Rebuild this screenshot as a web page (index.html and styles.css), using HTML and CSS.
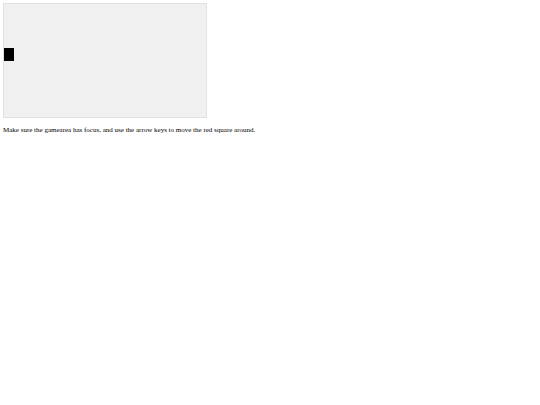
FILE: index.html
```
<!DOCTYPE html>
<html lang="en">
<head>
    <meta charset="UTF-8">
    <meta name="viewport" content="width=device-width, initial-scale=1.0">
    <title>Game</title>
    <link rel="stylesheet" href="styles.css">
</head>
<body>
    <canvas id="gamearea" class="gamearea" width="202" height="113" tabindex="0"></canvas>
    <p class="hint">Make sure the gamearea has focus, and use the arrow keys to move the red square around.</p>

    <script src="game.js"></script>
</body>
</html>
```
FILE: styles.css
```
body {
    margin: 3px;
    font-family: "Liberation Serif", "Times New Roman", serif;
    font-size: 7px;
    line-height: 8px;
    color: #000;
    background-color: #fff;
}

.gamearea {
    display: block;
    border: 1px solid #e1e1e1;
    background-color: #f0f0f0;
    outline: none;
}

.hint {
    margin: 8px 0;
}
```
FILE: game.js
```
const canvas = document.getElementById("gamearea");
const ctx = canvas.getContext("2d");
const player = { x: 0, y: 44, width: 10, height: 13 };
const step = 2;

function draw() {
    ctx.clearRect(0, 0, canvas.width, canvas.height);
    ctx.fillStyle = "black";
    ctx.fillRect(player.x, player.y, player.width, player.height);
}

canvas.addEventListener("keydown", function (e) {
    if (e.key === "ArrowLeft") player.x -= step;
    if (e.key === "ArrowRight") player.x += step;
    if (e.key === "ArrowUp") player.y -= step;
    if (e.key === "ArrowDown") player.y += step;
    draw();
});

draw();
```
